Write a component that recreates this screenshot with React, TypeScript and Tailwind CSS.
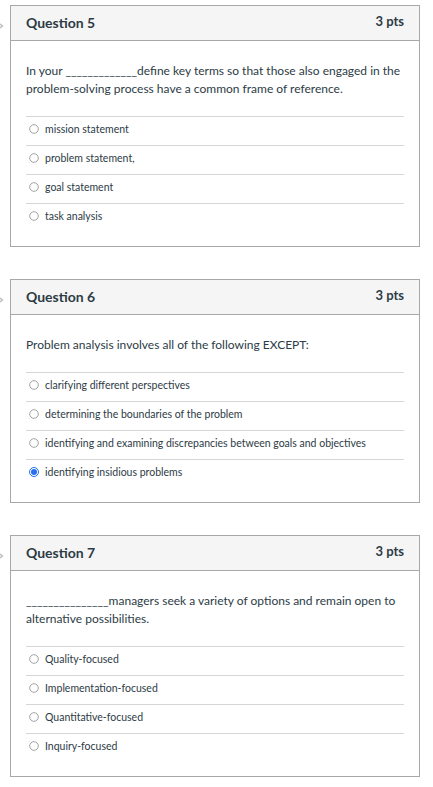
import React from "react";

type Q = {
  title: string;
  text: React.ReactNode;
  answers: string[];
  selected?: number;
};

const questions: Q[] = [
  {
    title: "Question 5",
    text: (
      <>In your _____________define key terms so that those also engaged in the problem-solving process have a common frame of reference.</>
    ),
    answers: ["mission statement", "problem statement,", "goal statement", "task analysis"],
  },
  {
    title: "Question 6",
    text: <>Problem analysis involves all of the following EXCEPT:</>,
    answers: [
      "clarifying different perspectives",
      "determining the boundaries of the problem",
      "identifying and examining discrepancies between goals and objectives",
      "identifying insidious problems",
    ],
    selected: 3,
  },
  {
    title: "Question 7",
    text: (
      <>_______________managers seek a variety of options and remain open to alternative possibilities.</>
    ),
    answers: ["Quality-focused", "Implementation-focused", "Quantitative-focused", "Inquiry-focused"],
  },
];

function Radio({ checked }: { checked?: boolean }) {
  if (checked) {
    return (
      <svg width="10" height="10" viewBox="0 0 10 10" className="shrink-0">
        <circle cx="5" cy="5" r="4.5" fill="#ffffff" stroke="#1a6fe8" strokeWidth="1" />
        <circle cx="5" cy="5" r="3" fill="#2a6ff0" />
      </svg>
    );
  }
  return (
    <svg width="10" height="10" viewBox="0 0 10 10" className="shrink-0">
      <circle cx="5" cy="5" r="4.3" fill="#ffffff" stroke="#8a8a8a" strokeWidth="0.8" />
    </svg>
  );
}

function Card({ q, first }: { q: Q; first?: boolean }) {
  return (
    <div className={"flex items-start " + (first ? "" : "mt-[32px]")}>
      <div className="w-[10px] overflow-hidden pt-[14px] shrink-0">
        <svg width="12" height="14" viewBox="0 0 12 14" className="-ml-[7px]">
          <path d="M2 1.5 L9.5 7 L2 12.5" fill="none" stroke="#bcbcbc" strokeWidth="1.3" />
        </svg>
      </div>
      <div className="w-[410px] border border-[#a8a8a8] bg-white">
        <div className="h-[35px] bg-[#f5f5f5] border-b border-[#a8a8a8] px-[15px] flex items-center justify-between">
          <span className="text-[14px] font-bold text-[#2d3b45] -mt-[2px]">{q.title}</span>
          <span className="text-[13px] font-bold text-[#2d3b45] -mt-[2px]">3 pts</span>
        </div>
        <div className="px-[15px] pt-[21px] pb-[14px]">
          <div className="text-[12px] leading-[18px] text-[#2d3b45] mb-[18px]">{q.text}</div>
          <div>
            {q.answers.map((a, i) => (
              <div key={i} className="h-[29px] border-t border-[#d6d6d6] pt-[5px] flex items-start gap-[6px] pl-[3px]">
                <div className="pt-[2px]">
                  <Radio checked={q.selected === i} />
                </div>
                <span className="text-[10.5px] leading-[14px] text-[#2d3b45]">{a}</span>
              </div>
            ))}
          </div>
        </div>
      </div>
    </div>
  );
}

export default function App() {
  return (
    <div className="w-[433px] min-h-[787px] bg-white pt-[5px]" style={{ fontFamily: "Lato, 'Noto Sans', sans-serif" }}>
      {questions.map((q, i) => (
        <Card key={i} q={q} first={i === 0} />
      ))}
    </div>
  );
}
